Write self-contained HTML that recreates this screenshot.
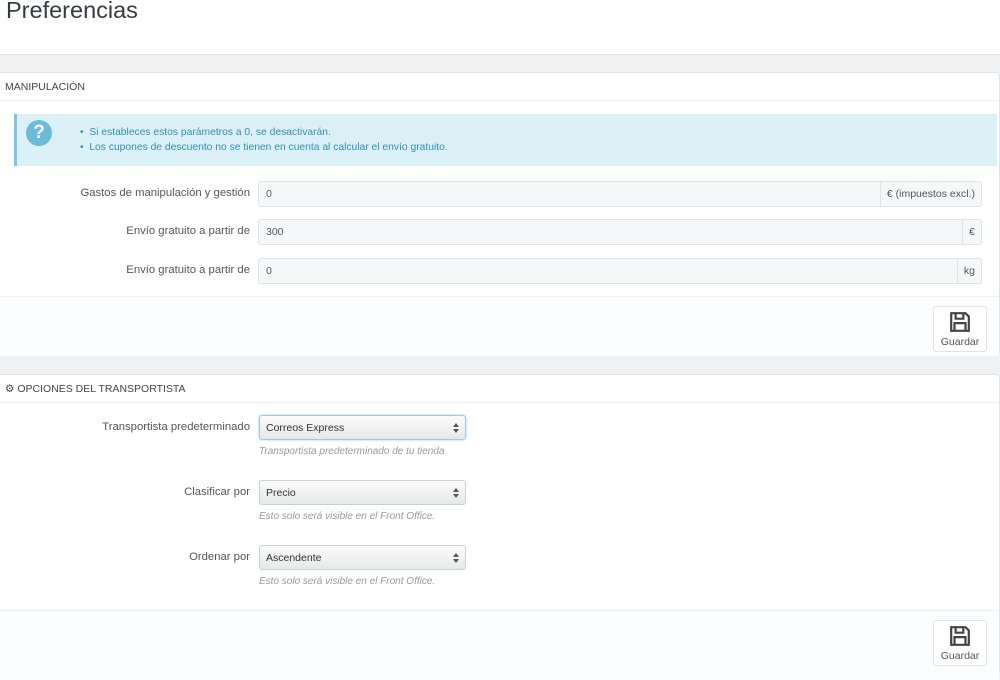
<!DOCTYPE html><html><head><style>
*{box-sizing:border-box;margin:0;padding:0}
body{width:1000px;height:670px;overflow:hidden;background:#eff1f2;font-family:"Liberation Sans",sans-serif;color:#555;position:relative}
.abs{position:absolute}
.hdr{left:0;top:0;width:1000px;height:55px;background:#fff;border-bottom:1px solid #dfe3e6}
.ttl{left:6px;top:-3px;font-size:23.5px;color:#363a41}
.panel{left:0;width:1000px;background:#fff;border:1px solid #e1e4e6;border-left:none;border-radius:0 4px 4px 0}
.ph{position:absolute;left:0;top:0;right:0;height:28px;border-bottom:1px solid #eef0f2;font-size:10.5px;color:#444;padding:8px 5px;font-family:"Liberation Sans Narrow","Liberation Sans",sans-serif}
.lbl{font-size:11.3px;color:#555;text-align:right;width:250px;left:0}
.inp{left:258px;height:26px;background:#f5f8f9;border:1px solid #dde3e6;border-radius:3px;font-size:10.5px;padding:6px 7px;color:#555}
.add{position:absolute;right:-1px;top:-1px;height:26px;border:1px solid #dde3e6;border-radius:0 3px 3px 0;background:#f5f8f9;padding:0 6px;line-height:24px;font-size:10.5px}
.sel{left:259px;width:207px;height:25px;border:1px solid #c7d0d5;border-radius:3px;background:linear-gradient(#fbfbfb,#e8e8e8);font-size:10.5px;padding:6px 6px;color:#333}
.sel:after{content:"";position:absolute;right:6px;top:7px;border:3px solid transparent;border-bottom:4px solid #555;border-top:none}
.sel:before{content:"";position:absolute;right:6px;top:13px;border:3px solid transparent;border-top:4px solid #555;border-bottom:none}
.help{left:259px;font-size:10px;font-style:italic;color:#999}
.foot{left:0;right:0;background:#fcfdfe;border-top:1px solid #eef0f2}
.btn{width:54px;height:46px;background:#fff;border:1px solid #e1e4e6;border-radius:3px;text-align:center;font-size:10.5px;color:#555;padding-top:4px}
</style></head><body>
<div class="abs hdr"><div class="abs ttl">Preferencias</div></div>

<div class="abs panel" style="top:72px;height:284px">
 <div class="ph">MANIPULACIÓN</div>
 <div class="abs" style="left:14px;top:41px;width:983px;height:52px;background:#dcf1f7;border-left:3px solid #7fc5dd">
  <div class="abs" style="left:9px;top:6px;width:26px;height:26px;border-radius:50%;background:#6bbbd9;color:#fff;font-weight:bold;font-size:19px;text-align:center;line-height:26px">?</div>
  <div class="abs" style="left:63px;top:11px;font-size:10.3px;color:#2e8fb0;line-height:15px">• &nbsp;Si estableces estos parámetros a 0, se desactivarán.<br>• &nbsp;Los cupones de descuento no se tienen en cuenta al calcular el envío gratuito.</div>
 </div>
 <div class="abs lbl" style="top:114px">Gastos de manipulación y gestión</div>
 <div class="abs inp" style="top:108px;width:724px">0<div class="add">€ (impuestos excl.)</div></div>
 <div class="abs lbl" style="top:152px">Envío gratuito a partir de</div>
 <div class="abs inp" style="top:146px;width:724px">300<div class="add">€</div></div>
 <div class="abs lbl" style="top:191px">Envío gratuito a partir de</div>
 <div class="abs inp" style="top:185px;width:724px">0<div class="add">kg</div></div>
 <div class="abs foot" style="top:223px;height:60px">
  <div class="abs btn" style="left:933px;top:9px"><svg width="22" height="22" viewBox="0 0 20 20"><path d="M2 2h13l3 3v13H2z M6 2v5h7V2 M5 18v-7h10v7" fill="none" stroke="#444" stroke-width="2"/></svg><div>Guardar</div></div>
 </div>
</div>

<div class="abs panel" style="top:374px;height:300px">
 <div class="ph">⚙ OPCIONES DEL TRANSPORTISTA</div>
 <div class="abs lbl" style="top:46px">Transportista predeterminado</div>
 <div class="abs sel" style="top:40px;border-color:#9fc8e8;box-shadow:0 0 2px #9fc8e8">Correos Express</div>
 <div class="abs help" style="top:71px">Transportista predeterminado de tu tienda</div>
 <div class="abs lbl" style="top:111px">Clasificar por</div>
 <div class="abs sel" style="top:105px">Precio</div>
 <div class="abs help" style="top:136px">Esto solo será visible en el Front Office.</div>
 <div class="abs lbl" style="top:176px">Ordenar por</div>
 <div class="abs sel" style="top:170px">Ascendente</div>
 <div class="abs help" style="top:201px">Esto solo será visible en el Front Office.</div>
 <div class="abs foot" style="top:235px;height:70px">
  <div class="abs btn" style="left:933px;top:9px"><svg width="22" height="22" viewBox="0 0 20 20"><path d="M2 2h13l3 3v13H2z M6 2v5h7V2 M5 18v-7h10v7" fill="none" stroke="#444" stroke-width="2"/></svg><div>Guardar</div></div>
 </div>
</div>
</body></html>
